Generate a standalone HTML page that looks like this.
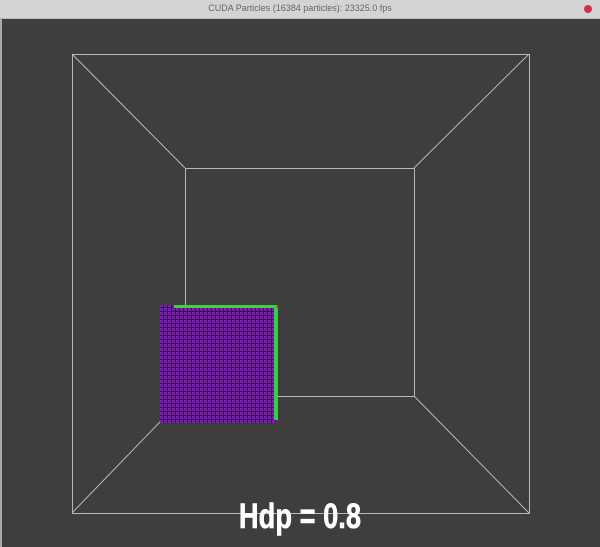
<html><body style="margin:0;width:600px;height:547px;overflow:hidden;background:#403e3c;position:relative;font-family:'Liberation Sans',sans-serif">
<div style="position:absolute;left:0;top:0;width:600px;height:18px;background:#d4d4d4;border-bottom:1px solid #bbb"></div>
<div style="position:absolute;left:0;top:3px;width:600px;text-align:center;font-size:9px;color:#666">CUDA Particles (16384 particles): 23325.0 fps</div>
<div style="position:absolute;left:584px;top:5px;width:8px;height:8px;border-radius:50%;background:#d03050"></div>
<div style="position:absolute;left:0;top:18px;width:2px;height:529px;background:#aaa"></div>
<svg width="600" height="547" style="position:absolute;left:0;top:0">
<defs><pattern id="p" width="4" height="4" patternUnits="userSpaceOnUse"><rect width="4" height="4" fill="#3a0f55"/><rect width="3" height="3" fill="#7d1ab8"/></pattern></defs>
<g stroke="#b8b8b8" stroke-width="1" fill="none">
<rect x="72.5" y="54.5" width="457" height="459"/>
<rect x="185.5" y="168.5" width="229" height="228"/>
<line x1="72" y1="54" x2="185" y2="168"/><line x1="529" y1="54" x2="414" y2="168"/>
<line x1="72" y1="513" x2="185" y2="396"/><line x1="529" y1="513" x2="414" y2="396"/>
</g>
<rect x="160" y="305" width="118" height="118" fill="url(#p)"/>
<rect x="174" y="305" width="104" height="3" fill="#40d040"/>
<rect x="274" y="305" width="4" height="115" fill="#30d040"/>
<rect x="277" y="305" width="1" height="3" fill="#e03020"/>
</svg>
<div style="position:absolute;left:300px;top:497px;transform:translateX(-50%) scaleX(0.78);font-size:35px;font-weight:bold;color:#fff;white-space:nowrap;line-height:40px;-webkit-text-stroke:0.6px #fff">Hdp = 0.8</div>
</body></html>
